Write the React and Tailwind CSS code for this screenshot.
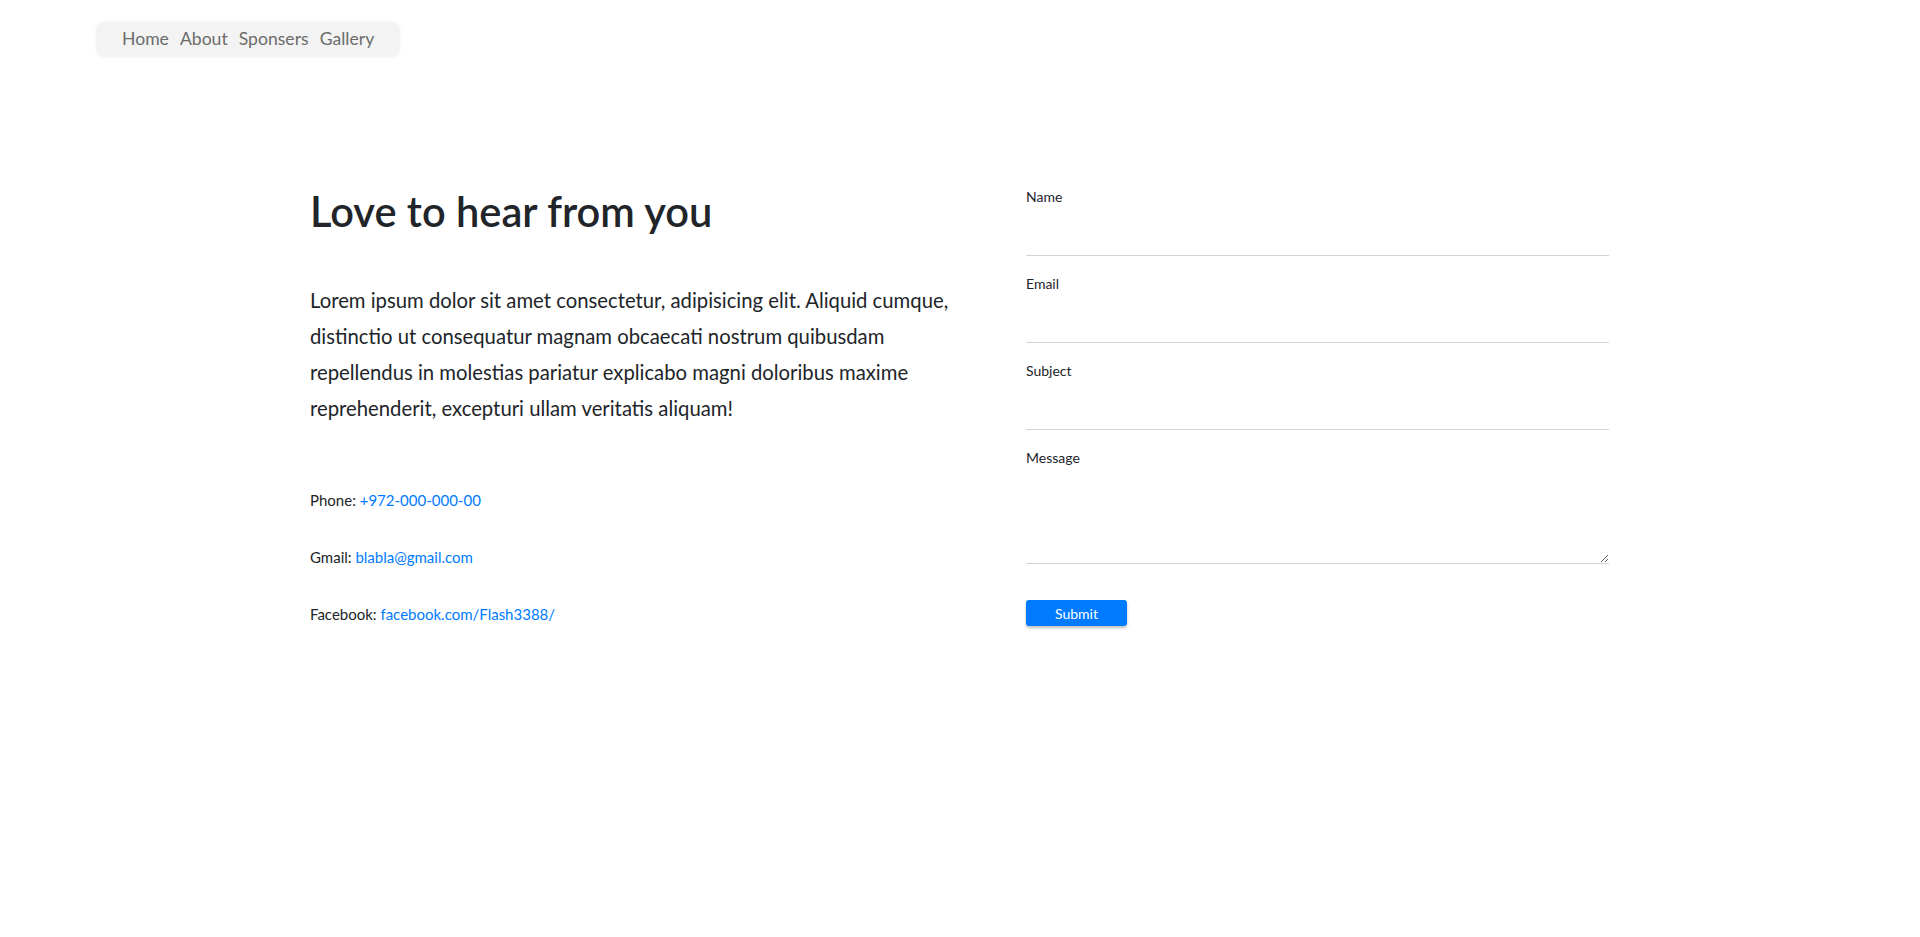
export default function App() {
  const fields = ["Name", "Email", "Subject"];

  return (
    <div className="min-h-screen bg-white text-[#212529] font-['Lato',sans-serif]">
      {/* Nav */}
      <nav className="pt-[22px] pl-[96px]">
        <div className="inline-flex h-[35px] items-center gap-[11px] rounded-lg bg-[#f3f3f3] px-[26px] text-[17.6px] text-[#6c6c6c] shadow-[0_0_4px_rgba(0,0,0,0.04)]">
          <a href="#home">Home</a>
          <a href="#about">About</a>
          <a href="#sponsers">Sponsers</a>
          <a href="#gallery">Gallery</a>
        </div>
      </nav>

      {/* Contact section */}
      <section className="mt-[130px] flex pl-[310px]">
        <div className="w-[660px]">
          <h1 className="text-[41.6px] leading-[48px] font-semibold">Love to hear from you</h1>
          <p className="mt-[47px] text-[20.3px] leading-[36px]">
            Lorem ipsum dolor sit amet consectetur, adipisicing elit. Aliquid cumque, distinctio ut consequatur magnam
            obcaecati nostrum quibusdam repellendus in molestias pariatur explicabo magni doloribus maxime reprehenderit,
            excepturi ullam veritatis aliquam!
          </p>

          <div className="mt-[62px] flex flex-col gap-[33px] text-[15px] leading-[24px]">
            <p>
              Phone: <a href="#" className="text-[#007bff]">+972-000-000-00</a>
            </p>
            <p>
              Gmail: <a href="#" className="text-[#007bff]">blabla@gmail.com</a>
            </p>
            <p>
              Facebook: <a href="#" className="text-[#007bff]">facebook.com/Flash3388/</a>
            </p>
          </div>
        </div>

        <form className="ml-[56px] w-[583px]" onSubmit={(e) => e.preventDefault()}>
          {fields.map((f) => (
            <div key={f} className="mb-[18px]">
              <label className="block text-[14px] leading-[20px]">{f}</label>
              <input type="text" className="block h-[49px] w-full border-b border-[#d4d4d4] outline-none" />
            </div>
          ))}
          <div>
            <label className="block text-[14px] leading-[20px]">Message</label>
            <textarea className="block h-[96px] w-full border-b border-[#d4d4d4] outline-none" />
          </div>
          <button
            type="submit"
            className="mt-[36px] h-[26px] w-[101px] rounded-[3px] bg-[#007bff] text-[14px] text-white shadow-[0_2px_3px_rgba(0,0,0,0.25)]"
          >
            Submit
          </button>
        </form>
      </section>
    </div>
  );
}
